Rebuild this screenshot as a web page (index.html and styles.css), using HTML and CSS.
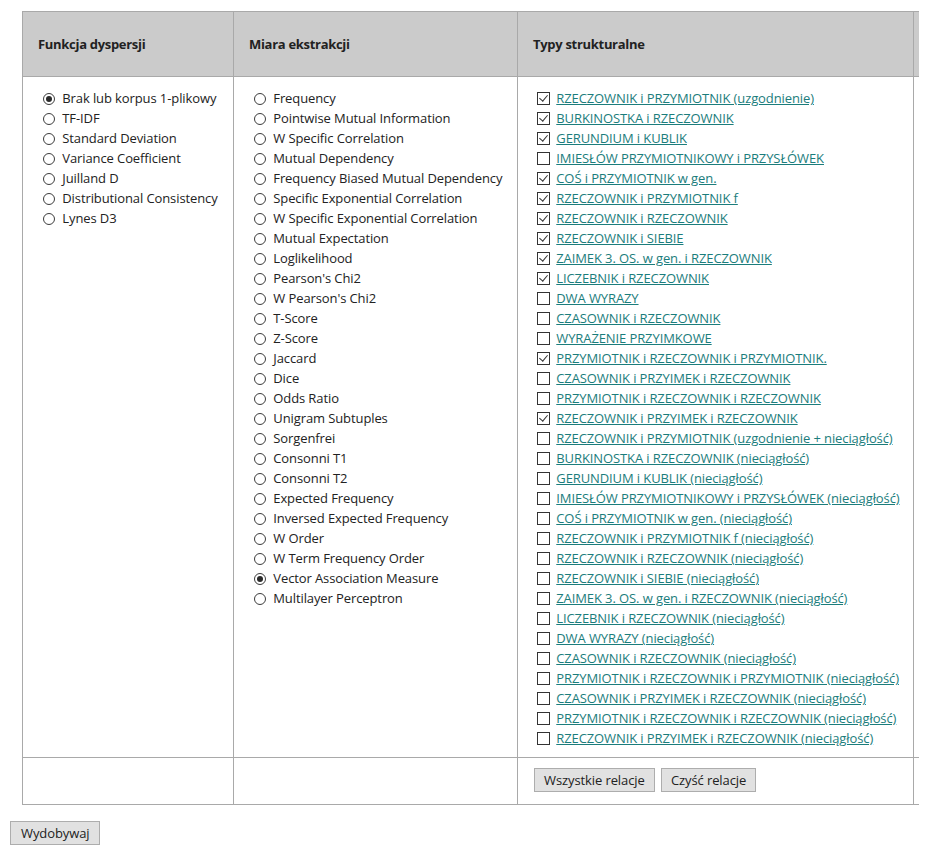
FILE: index.html
```html
<!DOCTYPE html>
<html lang="pl">

<head>
    <meta charset="UTF-8">
    <meta name="viewport" content="width=device-width, initial-scale=1.0">
    <title>Ekstrakcja</title>
    <link rel="stylesheet" href="styles.css">
</head>

<body>
    <form class="extract-form">
        <table class="options">
            <thead>
                <tr>
                    <th class="col-disp">Funkcja dyspersji</th>
                    <th class="col-measure">Miara ekstrakcji</th>
                    <th class="col-types">Typy strukturalne</th>
                    <th class="col-extra"></th>
                </tr>
            </thead>
            <tbody>
                <tr>
                    <td>
                        <ul class="choice-list">
                            <li><label><input type="radio" name="disp" checked> Brak lub korpus 1-plikowy</label></li>
                            <li><label><input type="radio" name="disp"> TF-IDF</label></li>
                            <li><label><input type="radio" name="disp"> Standard Deviation</label></li>
                            <li><label><input type="radio" name="disp"> Variance Coefficient</label></li>
                            <li><label><input type="radio" name="disp"> Juilland D</label></li>
                            <li><label><input type="radio" name="disp"> Distributional Consistency</label></li>
                            <li><label><input type="radio" name="disp"> Lynes D3</label></li>
                        </ul>
                    </td>
                    <td>
                        <ul class="choice-list">
                            <li><label><input type="radio" name="measure"> Frequency</label></li>
                            <li><label><input type="radio" name="measure"> Pointwise Mutual Information</label></li>
                            <li><label><input type="radio" name="measure"> W Specific Correlation</label></li>
                            <li><label><input type="radio" name="measure"> Mutual Dependency</label></li>
                            <li><label><input type="radio" name="measure"> Frequency Biased Mutual Dependency</label></li>
                            <li><label><input type="radio" name="measure"> Specific Exponential Correlation</label></li>
                            <li><label><input type="radio" name="measure"> W Specific Exponential Correlation</label></li>
                            <li><label><input type="radio" name="measure"> Mutual Expectation</label></li>
                            <li><label><input type="radio" name="measure"> Loglikelihood</label></li>
                            <li><label><input type="radio" name="measure"> Pearson's Chi2</label></li>
                            <li><label><input type="radio" name="measure"> W Pearson's Chi2</label></li>
                            <li><label><input type="radio" name="measure"> T-Score</label></li>
                            <li><label><input type="radio" name="measure"> Z-Score</label></li>
                            <li><label><input type="radio" name="measure"> Jaccard</label></li>
                            <li><label><input type="radio" name="measure"> Dice</label></li>
                            <li><label><input type="radio" name="measure"> Odds Ratio</label></li>
                            <li><label><input type="radio" name="measure"> Unigram Subtuples</label></li>
                            <li><label><input type="radio" name="measure"> Sorgenfrei</label></li>
                            <li><label><input type="radio" name="measure"> Consonni T1</label></li>
                            <li><label><input type="radio" name="measure"> Consonni T2</label></li>
                            <li><label><input type="radio" name="measure"> Expected Frequency</label></li>
                            <li><label><input type="radio" name="measure"> Inversed Expected Frequency</label></li>
                            <li><label><input type="radio" name="measure"> W Order</label></li>
                            <li><label><input type="radio" name="measure"> W Term Frequency Order</label></li>
                            <li><label><input type="radio" name="measure" checked> Vector Association Measure</label></li>
                            <li><label><input type="radio" name="measure"> Multilayer Perceptron</label></li>
                        </ul>
                    </td>
                    <td>
                        <ul class="choice-list types">
                            <li><input type="checkbox" checked> <a href="#">RZECZOWNIK i PRZYMIOTNIK (uzgodnienie)</a></li>
                            <li><input type="checkbox" checked> <a href="#">BURKINOSTKA i RZECZOWNIK</a></li>
                            <li><input type="checkbox" checked> <a href="#">GERUNDIUM i KUBLIK</a></li>
                            <li><input type="checkbox"> <a href="#">IMIESŁÓW PRZYMIOTNIKOWY i PRZYSŁÓWEK</a></li>
                            <li><input type="checkbox" checked> <a href="#">COŚ i PRZYMIOTNIK w gen.</a></li>
                            <li><input type="checkbox" checked> <a href="#">RZECZOWNIK i PRZYMIOTNIK f</a></li>
                            <li><input type="checkbox" checked> <a href="#">RZECZOWNIK i RZECZOWNIK</a></li>
                            <li><input type="checkbox" checked> <a href="#">RZECZOWNIK i SIEBIE</a></li>
                            <li><input type="checkbox" checked> <a href="#">ZAIMEK 3. OS. w gen. i RZECZOWNIK</a></li>
                            <li><input type="checkbox" checked> <a href="#">LICZEBNIK i RZECZOWNIK</a></li>
                            <li><input type="checkbox"> <a href="#">DWA WYRAZY</a></li>
                            <li><input type="checkbox"> <a href="#">CZASOWNIK i RZECZOWNIK</a></li>
                            <li><input type="checkbox"> <a href="#">WYRAŻENIE PRZYIMKOWE</a></li>
                            <li><input type="checkbox" checked> <a href="#">PRZYMIOTNIK i RZECZOWNIK i PRZYMIOTNIK.</a></li>
                            <li><input type="checkbox"> <a href="#">CZASOWNIK i PRZYIMEK i RZECZOWNIK</a></li>
                            <li><input type="checkbox"> <a href="#">PRZYMIOTNIK i RZECZOWNIK i RZECZOWNIK</a></li>
                            <li><input type="checkbox" checked> <a href="#">RZECZOWNIK i PRZYIMEK i RZECZOWNIK</a></li>
                            <li><input type="checkbox"> <a href="#">RZECZOWNIK i PRZYMIOTNIK (uzgodnienie + nieciągłość)</a></li>
                            <li><input type="checkbox"> <a href="#">BURKINOSTKA i RZECZOWNIK (nieciągłość)</a></li>
                            <li><input type="checkbox"> <a href="#">GERUNDIUM i KUBLIK (nieciągłość)</a></li>
                            <li><input type="checkbox"> <a href="#">IMIESŁÓW PRZYMIOTNIKOWY i PRZYSŁÓWEK (nieciągłość)</a></li>
                            <li><input type="checkbox"> <a href="#">COŚ i PRZYMIOTNIK w gen. (nieciągłość)</a></li>
                            <li><input type="checkbox"> <a href="#">RZECZOWNIK i PRZYMIOTNIK f (nieciągłość)</a></li>
                            <li><input type="checkbox"> <a href="#">RZECZOWNIK i RZECZOWNIK (nieciągłość)</a></li>
                            <li><input type="checkbox"> <a href="#">RZECZOWNIK i SIEBIE (nieciągłość)</a></li>
                            <li><input type="checkbox"> <a href="#">ZAIMEK 3. OS. w gen. i RZECZOWNIK (nieciągłość)</a></li>
                            <li><input type="checkbox"> <a href="#">LICZEBNIK i RZECZOWNIK (nieciągłość)</a></li>
                            <li><input type="checkbox"> <a href="#">DWA WYRAZY (nieciągłość)</a></li>
                            <li><input type="checkbox"> <a href="#">CZASOWNIK i RZECZOWNIK (nieciągłość)</a></li>
                            <li><input type="checkbox"> <a href="#">PRZYMIOTNIK i RZECZOWNIK i PRZYMIOTNIK (nieciągłość)</a></li>
                            <li><input type="checkbox"> <a href="#">CZASOWNIK i PRZYIMEK i RZECZOWNIK (nieciągłość)</a></li>
                            <li><input type="checkbox"> <a href="#">PRZYMIOTNIK i RZECZOWNIK i RZECZOWNIK (nieciągłość)</a></li>
                            <li><input type="checkbox"> <a href="#">RZECZOWNIK i PRZYIMEK i RZECZOWNIK (nieciągłość)</a></li>
                        </ul>
                    </td>
                    <td></td>
                </tr>
                <tr class="footer-row">
                    <td></td>
                    <td></td>
                    <td>
                        <button type="button" class="btn">Wszystkie relacje</button>
                        <button type="button" class="btn">Czyść relacje</button>
                    </td>
                    <td></td>
                </tr>
            </tbody>
        </table>
        <button type="submit" class="btn submit">Wydobywaj</button>
    </form>
</body>

</html>
```

FILE: styles.css
```css
html,
body {
    overflow-x: hidden;
}

body {
    margin: 11px 10px 10px 10px;
    color: #222;
    background-color: #fff;
    font-family: "Open Sans", "Noto Sans", sans-serif;
    font-size: 13px;
    letter-spacing: -0.1px;
}

.options {
    margin-left: 12px;
    border-collapse: collapse;
    table-layout: fixed;
    width: 940px;
}

.options th,
.options td {
    border: 1px solid #a9a9a9;
    vertical-align: top;
}

.options th {
    height: 64px;
    padding: 0 0 0 15px;
    text-align: left;
    vertical-align: middle;
    font-weight: 700;
    font-size: 13px;
    letter-spacing: -0.3px;
    background-color: #cbcbcb;
}

.col-disp {
    width: 195px;
}

.col-measure {
    width: 268px;
}

.col-types {
    width: 380px;
}

.options td {
    padding: 11px 0 0 19px;
}

.choice-list {
    margin: 0 0 9px 0;
    padding: 0;
    list-style: none;
}

.choice-list li {
    height: 20px;
    line-height: 20px;
    white-space: nowrap;
}

.choice-list input {
    appearance: none;
    -webkit-appearance: none;
    margin: 0 4px 0 1px;
    vertical-align: -2px;
    position: relative;
    background-color: #fff;
}

.choice-list input[type="radio"] {
    width: 12px;
    height: 12px;
    border: 1px solid #3c3c3c;
    border-radius: 50%;
}

.choice-list input[type="radio"]:checked::after {
    content: "";
    position: absolute;
    left: 2px;
    top: 2px;
    width: 6px;
    height: 6px;
    border-radius: 50%;
    background-color: #2a2a2a;
}

.choice-list input[type="checkbox"] {
    width: 13px;
    height: 13px;
    margin: 0 3px 0 0;
    border: 1px solid #333;
    border-radius: 0;
}

.choice-list input[type="checkbox"]:checked::after {
    content: "";
    position: absolute;
    left: 3px;
    top: 0px;
    width: 4px;
    height: 7px;
    border: solid #333;
    border-width: 0 1px 1px 0;
    transform: rotate(40deg);
}

.types a {
    color: #1b7d7c;
}

.footer-row td {
    height: 36px;
    padding: 10px 0 0 16px;
}

.btn {
    height: 24px;
    padding: 0 9px;
    margin-right: 3px;
    font-family: "Open Sans", "Noto Sans", sans-serif;
    font-size: 13px;
    letter-spacing: -0.1px;
    color: #222;
    background-color: #e1e1e1;
    border: 1px solid #adadad;
    border-radius: 0;
}

.submit {
    display: block;
    margin-top: 16px;
    padding: 0 10px;
}
```
